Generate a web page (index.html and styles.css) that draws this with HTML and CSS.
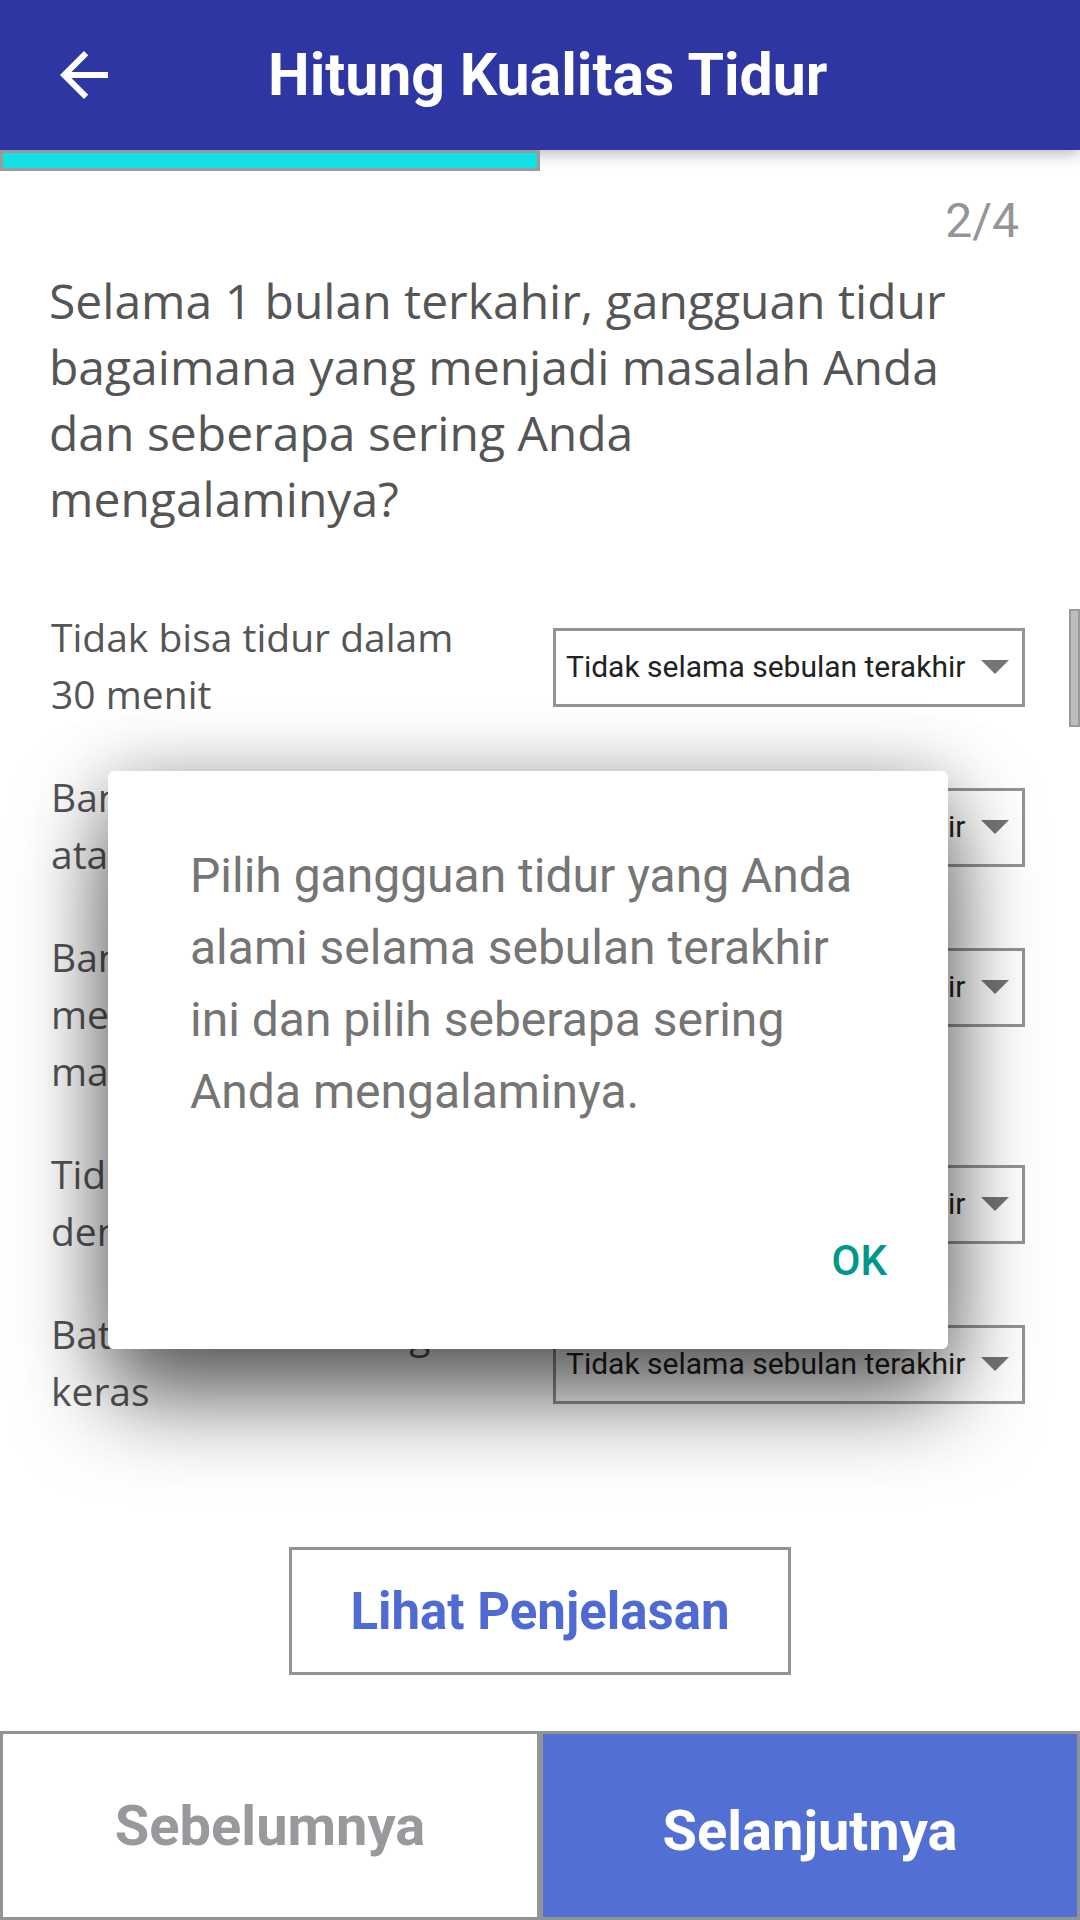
FILE: index.html
```html
<!DOCTYPE html>
<html lang="id">
<head>
<meta charset="utf-8">
<title>Hitung Kualitas Tidur</title>
<link rel="stylesheet" href="styles.css">
</head>
<body>
<header class="appbar">
  <button class="back" aria-label="Kembali">
    <svg viewBox="0 0 24 24" width="72" height="72"><path fill="#fff" d="M20 11H7.83l5.59-5.59L12 4l-8 8 8 8 1.41-1.41L7.83 13H20v-2z"/></svg>
  </button>
  <h1 class="title">Hitung Kualitas Tidur</h1>
</header>
<div class="progress"></div>

<main class="content">
  <div class="counter">2/4</div>
  <p class="question">Selama 1 bulan terkahir, gangguan tidur bagaimana yang menjadi masalah Anda dan seberapa sering Anda mengalaminya?</p>

  <div class="rows">
    <div class="row">
      <div class="label">Tidak bisa tidur dalam 30 menit</div>
      <div class="select"><span>Tidak selama sebulan terakhir</span><i class="caret"></i></div>
    </div>
    <div class="row">
      <div class="label">Bangun tengah malam atau dini hari</div>
      <div class="select"><span>Tidak selama sebulan terakhir</span><i class="caret"></i></div>
    </div>
    <div class="row">
      <div class="label">Bangun untuk menggunakan kamar mandi</div>
      <div class="select"><span>Tidak selama sebulan terakhir</span><i class="caret"></i></div>
    </div>
    <div class="row">
      <div class="label">Tidak dapat bernapas dengan nyaman</div>
      <div class="select"><span>Tidak selama sebulan terakhir</span><i class="caret"></i></div>
    </div>
    <div class="row">
      <div class="label">Batuk atau mendengkur keras</div>
      <div class="select"><span>Tidak selama sebulan terakhir</span><i class="caret"></i></div>
    </div>
  </div>

  <button class="explain">Lihat Penjelasan</button>
</main>

<footer class="nav">
  <button class="nav-btn prev">Sebelumnya</button>
  <button class="nav-btn next">Selanjutnya</button>
</footer>

<div class="scrollthumb"></div>

<div class="dialog" role="dialog">
  <p class="dialog-text">Pilih gangguan tidur yang Anda alami selama sebulan terakhir ini dan pilih seberapa sering Anda mengalaminya.</p>
  <div class="dialog-actions"><button class="ok">OK</button></div>
</div>
</body>
</html>
```
FILE: styles.css
```css
* { box-sizing: border-box; }
html, body { margin: 0; padding: 0; }
body {
  width: 1080px;
  height: 1920px;
  overflow: hidden;
  position: relative;
  display: flex;
  flex-direction: column;
  background: #fff;
  font-family: Roboto, "Liberation Sans", sans-serif;
}
button { font: inherit; background: none; border: 0; padding: 0; margin: 0; }

.appbar {
  height: 150px;
  flex: none;
  background: #2d36a2;
  display: flex;
  align-items: center;
  position: relative;
  z-index: 1;
  box-shadow: 0 4px 14px rgba(0,0,0,0.28);
}
.back {
  width: 72px;
  height: 72px;
  margin-left: 48px;
  display: flex;
}
.title {
  margin: 0 0 0 148px;
  color: #fff;
  font-family: Roboto, sans-serif;
  font-weight: 700;
  font-size: 59px;
  line-height: 70px;
}

.progress {
  width: 540px;
  height: 21px;
  flex: none;
  border: 3px solid #9a9a9a;
  background: #14e0e6;
  position: relative;
  z-index: 2;
}

.content { display: flex; flex-direction: column; }

.counter {
  margin-top: 22px;
  padding-right: 61px;
  text-align: right;
  font-family: Roboto, sans-serif;
  font-size: 48px;
  line-height: 56px;
  color: #939598;
}

.question {
  margin: 19px 110px 0 49px;
  font-family: "Open Sans", sans-serif;
  font-size: 48px;
  line-height: 66px;
  color: #555;
}

.rows {
  margin-top: 76px;
  display: flex;
  flex-direction: column;
  gap: 46px;
}
.row {
  display: flex;
  align-items: flex-start;
  padding: 0 55px 0 51px;
  gap: 60px;
}
.label {
  flex: 1;
  font-family: "Open Sans", sans-serif;
  font-size: 39px;
  line-height: 57px;
  color: #555;
}
.select {
  width: 472px;
  height: 79px;
  flex: none;
  margin-top: 20px;
  border: 3px solid #929496;
  display: flex;
  align-items: center;
  justify-content: space-between;
  padding: 0 13px 2px 10px;
  font-family: Roboto, sans-serif;
  font-size: 30px;
  color: #222;
}
.caret {
  width: 0;
  height: 0;
  border-left: 14px solid transparent;
  border-right: 14px solid transparent;
  border-top: 14px solid #757575;
}

.explain {
  width: 502px;
  height: 128px;
  margin: 128px auto 0;
  border: 3px solid #929496;
  font-family: Roboto, sans-serif;
  font-weight: 700;
  font-size: 51px;
  color: #4f6bd3;
}

.nav {
  margin-top: auto;
  height: 189px;
  flex: none;
  display: flex;
}
.nav-btn {
  flex: 1;
  border: 3px solid #929496;
  font-family: Roboto, sans-serif;
  font-weight: 700;
  font-size: 56px;
}
.prev { background: #fff; color: #97999c; }
.next { background: #5270d3; color: #fff; padding-top: 10px; }

.scrollthumb {
  position: absolute;
  right: 0;
  top: 609px;
  width: 11px;
  height: 118px;
  background: #bdbdbd;
  border: 2px solid #9a9a9a;
}

.dialog {
  position: absolute;
  left: 108px;
  top: 771px;
  width: 840px;
  height: 578px;
  background: #fff;
  border-radius: 6px;
  padding: 69px 61px 0 82px;
  box-shadow: 0 50px 90px rgba(0,0,0,0.6), 0 0 70px rgba(0,0,0,0.22);
  z-index: 5;
}
.dialog-text {
  margin: 0;
  width: 675px;
  font-family: Roboto, sans-serif;
  font-size: 48px;
  line-height: 72px;
  color: #757575;
}
.dialog-actions {
  margin-top: 112px;
  text-align: right;
}
.ok {
  font-family: Roboto, sans-serif;
  font-weight: 500;
  font-size: 42px;
  line-height: 42px;
  color: #009688;
}
```
